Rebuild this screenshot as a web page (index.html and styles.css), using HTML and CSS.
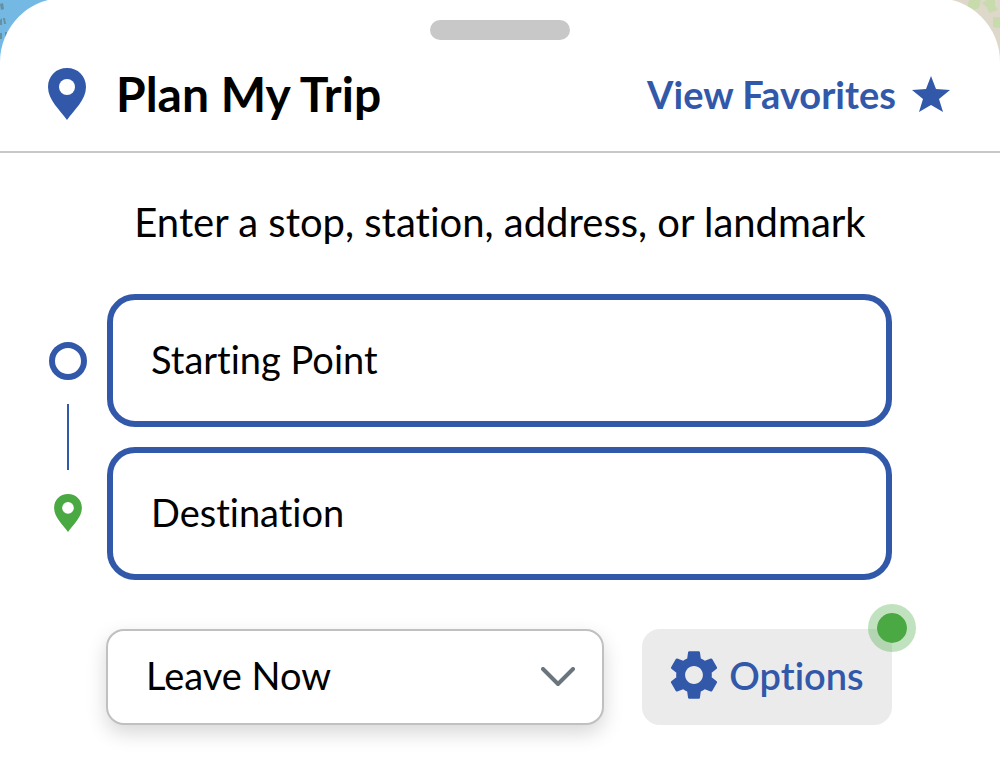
FILE: index.html
```html
<!DOCTYPE html>
<html lang="en">
<head>
  <meta charset="UTF-8" />
  <meta name="viewport" content="width=device-width, initial-scale=1" />
  <title>Plan My Trip</title>
  <link rel="stylesheet" href="styles.css">
</head>
<body>
  <div class="map">
    <svg class="map-corner" viewBox="0 0 64 64" aria-hidden="true">
      <rect width="64" height="64" fill="#74b9e4" />
      <path d="M0 4l3-1 1 6-3 1zM0 20l2-2 0 7-2 0zM3 18l2 0 1 6-2 0zM0 33l2 0 0 6-2 0zM5 32l2 0 0 6-2 0z" fill="#64909f" />
    </svg>
    <svg class="map-corner" viewBox="0 0 64 64" aria-hidden="true">
      <rect width="64" height="64" fill="#ddd8c9" />
      <path d="M33 0l12 0-2 8-8 3-4-3zM46 3l5-3 8 0 0 6 3 4-9 3-2-6zM57 17l7 0 0 11-7-1z" fill="#c8dbac" />
    </svg>
  </div>

  <main class="sheet">
    <div class="handle"></div>

    <header class="sheet-header">
      <svg class="title-pin" viewBox="0 0 38 52" aria-hidden="true">
        <path d="M19 0C8 0 0 8 0 19c0 13 12 23 19 33 7-10 19-20 19-33C38 8 30 0 19 0z" fill="#3259a9" />
        <circle cx="19" cy="19" r="8" fill="#fff" />
      </svg>
      <h1>Plan My Trip</h1>
      <a href="#" class="favorites">
        View Favorites
        <svg class="star" viewBox="0 0 38 36" aria-hidden="true">
          <path d="M19 0l5 13 14 1-11 9 4 13-12-7-12 7 4-13L0 14l14-1z" fill="currentColor" />
        </svg>
      </a>
    </header>

    <form class="trip-form">
      <p class="hint">Enter a stop, station, address, or landmark</p>

      <div class="route">
        <div class="route-marks">
          <span class="start-mark"></span>
          <span class="route-line"></span>
          <svg class="end-pin" viewBox="0 0 38 52" aria-hidden="true">
            <path d="M19 0C8 0 0 8 0 19c0 13 12 23 19 33 7-10 19-20 19-33C38 8 30 0 19 0z" fill="#4aa942" />
            <circle cx="19" cy="19" r="8" fill="#fff" />
          </svg>
        </div>
        <div class="route-fields">
          <input type="text" class="field" placeholder="Starting Point" aria-label="Starting Point">
          <input type="text" class="field" placeholder="Destination" aria-label="Destination">
        </div>
      </div>

      <div class="actions">
        <div class="select-wrap">
          <select class="time-select" aria-label="Departure time">
            <option>Leave Now</option>
            <option>Leave At</option>
            <option>Arrive By</option>
          </select>
          <svg class="chevron" viewBox="0 0 34 20" aria-hidden="true">
            <path d="M2 2l15 15L32 2" fill="none" stroke="#6b757d" stroke-width="4" stroke-linecap="round" stroke-linejoin="round" />
          </svg>
        </div>
        <button type="button" class="options">
          <svg class="gear" viewBox="2.3 2.3 19.4 19.4" aria-hidden="true">
            <path d="M19.14 12.94c.04-.3.06-.61.06-.94 0-.32-.02-.64-.07-.94l2.03-1.58a.49.49 0 0 0 .12-.61l-1.92-3.32a.488.488 0 0 0-.59-.22l-2.39.96c-.5-.38-1.03-.7-1.62-.94l-.36-2.54a.484.484 0 0 0-.48-.41h-3.84c-.24 0-.43.17-.47.41l-.36 2.54c-.59.24-1.13.57-1.62.94l-2.39-.96c-.22-.08-.47 0-.59.22L2.74 8.87c-.12.21-.08.47.12.61l2.03 1.58c-.05.3-.09.63-.09.94s.02.64.07.94l-2.03 1.58a.49.49 0 0 0-.12.61l1.92 3.32c.12.22.37.29.59.22l2.39-.96c.5.38 1.03.7 1.62.94l.36 2.54c.05.24.24.41.48.41h3.84c.24 0 .44-.17.47-.41l.36-2.54c.59-.24 1.13-.56 1.62-.94l2.39.96c.22.08.47 0 .59-.22l1.92-3.32c.12-.22.07-.47-.12-.61l-2.01-1.58zM12 15.6c-1.98 0-3.6-1.62-3.6-3.6s1.62-3.6 3.6-3.6 3.6 1.62 3.6 3.6-1.62 3.6-3.6 3.6z" fill="currentColor" />
          </svg>
          Options
          <span class="badge"></span>
        </button>
      </div>
    </form>
  </main>
</body>
</html>
```

FILE: styles.css
```css
* {
  box-sizing: border-box;
}

body {
  margin: 0;
  background: #fff;
  color: #000;
  font-family: Lato, "Open Sans", sans-serif;
  font-size: 38px;
  font-variant-ligatures: none;
  line-height: 48px;
}

/* map shows behind the rounded corners of the sheet */
.map {
  position: absolute;
  top: 0;
  left: 0;
  right: 0;
  display: flex;
  justify-content: space-between;
}

.map-corner {
  width: 64px;
  height: 64px;
}

.sheet {
  position: relative;
  margin-top: -2px;
  padding-top: 22px;
  background: #fff;
  border-radius: 64px 64px 0 0;
}

.handle {
  width: 140px;
  height: 20px;
  margin: 0 auto;
  background: #c8c8c8;
  border-radius: 10px;
}

.sheet-header {
  display: flex;
  align-items: center;
  height: 113px;
  padding: 0 50px 4px 48px;
  border-bottom: 2px solid #c8c8c8;
}

.title-pin {
  width: 38px;
  height: 52px;
  margin-right: 30px;
}

h1 {
  margin: 0;
  font-size: 48px;
  font-weight: 700;
}

.favorites {
  display: flex;
  align-items: center;
  gap: 16px;
  margin-left: auto;
  color: #3259a9;
  font-weight: 700;
  text-decoration: none;
}

.star {
  width: 38px;
  height: 36px;
}

.trip-form {
  padding: 45px 48px;
}

.hint {
  margin: 0 0 48px;
  font-size: 40px;
  text-align: center;
}

.route {
  display: flex;
  gap: 20px;
  margin-right: 60px;
}

.route-marks {
  display: flex;
  flex-direction: column;
  align-items: center;
  justify-content: space-between;
  width: 39px;
  padding: 48px 0;
}

.start-mark {
  width: 38px;
  height: 38px;
  border: 6px solid #3259a9;
  border-radius: 50%;
}

.route-line {
  width: 2px;
  height: 66px;
  background: #3259a9;
}

.end-pin {
  width: 28px;
  height: 38px;
}

.route-fields {
  display: flex;
  flex: 1;
  flex-direction: column;
  gap: 20px;
}

.field {
  width: 100%;
  height: 133px;
  padding: 0 38px 4px;
  border: 6px solid #3259a9;
  border-radius: 28px;
  background: #fff;
  color: #000;
  font: inherit;
}

.field::placeholder {
  color: #000;
  opacity: 1;
}

.actions {
  display: flex;
  gap: 38px;
  margin: 49px 60px 0 58px;
}

.select-wrap {
  position: relative;
  flex: 1;
}

.time-select {
  width: 100%;
  height: 96px;
  padding: 0 38px 4px;
  border: 2px solid #c0c0c0;
  border-radius: 18px;
  background: #fff;
  box-shadow: 0 8px 20px rgba(0, 0, 0, 0.16);
  color: #000;
  font: inherit;
  appearance: none;
}

.chevron {
  position: absolute;
  top: 38px;
  right: 29px;
  width: 34px;
  height: 20px;
  pointer-events: none;
}

.options {
  position: relative;
  display: flex;
  align-items: center;
  justify-content: center;
  gap: 11px;
  width: 250px;
  height: 96px;
  padding: 0 0 4px;
  border: 0;
  border-radius: 18px;
  background: #ebebeb;
  color: #3259a9;
  font: inherit;
  font-weight: 600;
}

.gear {
  width: 48px;
  height: 48px;
}

.badge {
  position: absolute;
  top: -25px;
  right: -24px;
  width: 48px;
  height: 48px;
  border: 9px solid rgba(74, 169, 66, 0.34);
  border-radius: 50%;
  background: #4aa942;
  background-clip: padding-box;
}
```
